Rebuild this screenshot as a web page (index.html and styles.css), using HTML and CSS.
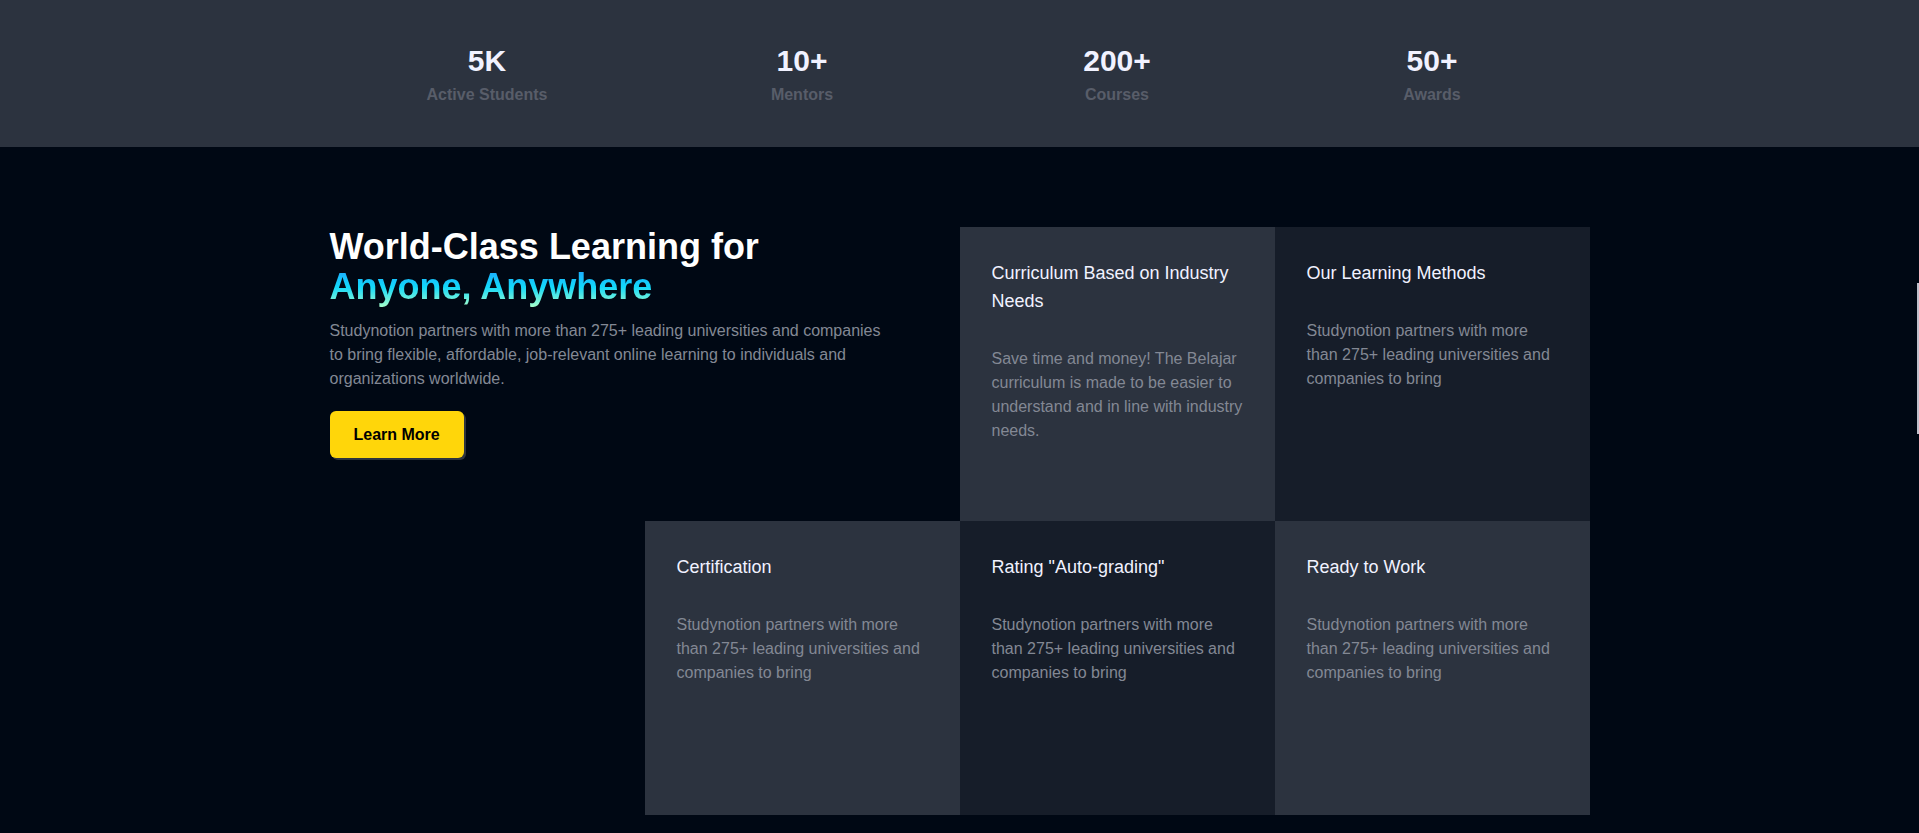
FILE: index.html
```html
<!DOCTYPE html>
<html lang="en">
<head>
<meta charset="utf-8">
<title>StudyNotion - About</title>
<link rel="stylesheet" href="styles.css">
</head>
<body>
  <section class="stats">
    <div class="stats-grid">
      <div class="stat"><h1 class="stat-count">5K</h1><h2 class="stat-label">Active Students</h2></div>
      <div class="stat"><h1 class="stat-count">10+</h1><h2 class="stat-label">Mentors</h2></div>
      <div class="stat"><h1 class="stat-count">200+</h1><h2 class="stat-label">Courses</h2></div>
      <div class="stat"><h1 class="stat-count">50+</h1><h2 class="stat-label">Awards</h2></div>
    </div>
  </section>

  <section class="learning">
    <div class="grid">
      <div class="intro">
        <div class="intro-title">World-Class Learning for <span class="highlight">Anyone, Anywhere</span></div>
        <p class="intro-text">Studynotion partners with more than 275+ leading universities and companies to bring flexible, affordable, job-relevant online learning to individuals and organizations worldwide.</p>
        <div class="btn-wrap"><a class="cta" href="#">Learn More</a></div>
      </div>

      <div class="card light">
        <h3 class="card-title">Curriculum Based on Industry Needs</h3>
        <p class="card-text">Save time and money! The Belajar curriculum is made to be easier to understand and in line with industry needs.</p>
      </div>
      <div class="card dark">
        <h3 class="card-title">Our Learning Methods</h3>
        <p class="card-text">Studynotion partners with more than 275+ leading universities and companies to bring</p>
      </div>
      <div class="card light start2">
        <h3 class="card-title">Certification</h3>
        <p class="card-text">Studynotion partners with more than 275+ leading universities and companies to bring</p>
      </div>
      <div class="card dark">
        <h3 class="card-title">Rating "Auto-grading"</h3>
        <p class="card-text">Studynotion partners with more than 275+ leading universities and companies to bring</p>
      </div>
      <div class="card light">
        <h3 class="card-title">Ready to Work</h3>
        <p class="card-text">Studynotion partners with more than 275+ leading universities and companies to bring</p>
      </div>
    </div>
  </section>

  <div class="scroll-thumb"></div>
</body>
</html>
```

FILE: styles.css
```css
* { box-sizing: border-box; }

html, body {
  margin: 0;
  padding: 0;
}

body {
  background: #000814;
  font-family: "Liberation Sans", Arial, sans-serif;
  line-height: 1.5;
  color: #ffffff;
  height: 833px;
  overflow: hidden;
}

h1, h2, h3, p { margin: 0; }

.stats {
  background: #2C333F;
}

.stats-grid {
  width: 1260px;
  margin: 0 auto;
  display: grid;
  grid-template-columns: repeat(4, 1fr);
  text-align: center;
}

.stat {
  display: flex;
  flex-direction: column;
  padding: 38px 0 40px;
}

.stat-count {
  font-size: 30px;
  font-weight: 700;
  color: #F1F2FF;
  line-height: 45px;
}

.stat-label {
  font-size: 16px;
  font-weight: 700;
  color: #585D69;
  line-height: 24px;
}

.learning {
  width: 1260px;
  margin: 80px auto 0;
}

.grid {
  display: grid;
  grid-template-columns: repeat(4, 315px);
}

.intro {
  grid-column: span 2;
  height: 294px;
  display: flex;
  flex-direction: column;
  gap: 12px;
}

.intro-title {
  font-size: 36px;
  line-height: 40px;
  font-weight: 700;
  color: #ffffff;
}

.highlight {
  display: block;
  width: fit-content;
  font-weight: 700;
  background: linear-gradient(to bottom, #1FA2FF, #12D8FA, #A6FFCB);
  -webkit-background-clip: text;
  background-clip: text;
  color: transparent;
}

.intro-text {
  width: 90%;
  font-size: 16px;
  line-height: 24px;
  color: #838894;
}

.btn-wrap {
  width: fit-content;
  margin-top: 8px;
}

.cta {
  display: block;
  padding: 12px 24px;
  border-radius: 6px;
  background: #FFD60A;
  color: #000000;
  font-size: 16px;
  line-height: 23px;
  font-weight: 700;
  text-decoration: none;
  text-align: center;
  box-shadow: 2px 2px 0 0 rgba(255, 255, 255, 0.18);
}

.card {
  height: 294px;
  padding: 32px;
  display: flex;
  flex-direction: column;
  gap: 32px;
}

.card.light { background: #2C333F; }
.card.dark { background: #161D29; }
.card.start2 { grid-column-start: 2; }

.card-title {
  font-size: 18px;
  line-height: 28px;
  font-weight: 400;
  color: #F1F2FF;
}

.card-text {
  font-size: 16px;
  line-height: 24px;
  color: #838894;
}

.scroll-thumb {
  position: fixed;
  right: 0;
  top: 283px;
  width: 2px;
  height: 151px;
  background: #BFC0CB;
}
```
